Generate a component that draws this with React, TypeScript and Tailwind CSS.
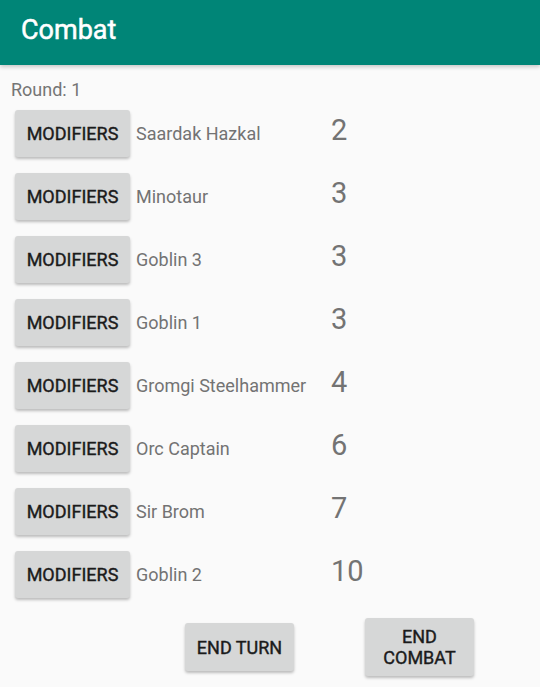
import React from 'react';

const combatants = [
  { name: 'Saardak Hazkal', init: 2 },
  { name: 'Minotaur', init: 3 },
  { name: 'Goblin 3', init: 3 },
  { name: 'Goblin 1', init: 3 },
  { name: 'Gromgi Steelhammer', init: 4 },
  { name: 'Orc Captain', init: 6 },
  { name: 'Sir Brom', init: 7 },
  { name: 'Goblin 2', init: 10 },
];

const btn =
  'bg-[#d6d7d7] rounded-[3px] shadow-[0_2px_3px_rgba(0,0,0,0.25)] text-[#1b1b1b] text-[18px] font-normal leading-[21px] [-webkit-text-stroke:0.4px_#1b1b1b]';

const App = () => {
  return (
    <div className="w-[540px] h-[687px] bg-[#fafafa] font-['Roboto',sans-serif] overflow-hidden">
      <header className="h-[65px] bg-[#008577] flex items-center px-[21px] shadow-[0_2px_4px_rgba(0,0,0,0.2)]">
        <h1 className="text-white text-[27px] font-normal -mt-[4px] [-webkit-text-stroke:0.5px_#ffffff]">Combat</h1>
      </header>

      <div className="pl-[11px] pt-[14px] text-[#757575] text-[18px] leading-[22px]">Round: 1</div>

      <div className="pl-[15px] pt-[9px]">
        {combatants.map((c) => (
          <div key={c.name} className="h-[63px] flex items-start">
            <button className={`${btn} w-[115px] h-[47px]`}>MODIFIERS</button>
            <span className="ml-[6px] w-[195px] h-[47px] flex items-center text-[#737373] text-[18px]">
              {c.name}
            </span>
            <span className="text-[#737373] text-[29px] leading-[38px] mt-[1px]">{c.init}</span>
          </div>
        ))}
      </div>

      <div className="flex items-center mt-[4px]">
        <button className={`${btn} ml-[185px] w-[109px] h-[48px]`}>END TURN</button>
        <button className={`${btn} ml-[71px] w-[109px] h-[58px]`}>
          END
          <br />
          COMBAT
        </button>
      </div>
    </div>
  );
};

export default App;
